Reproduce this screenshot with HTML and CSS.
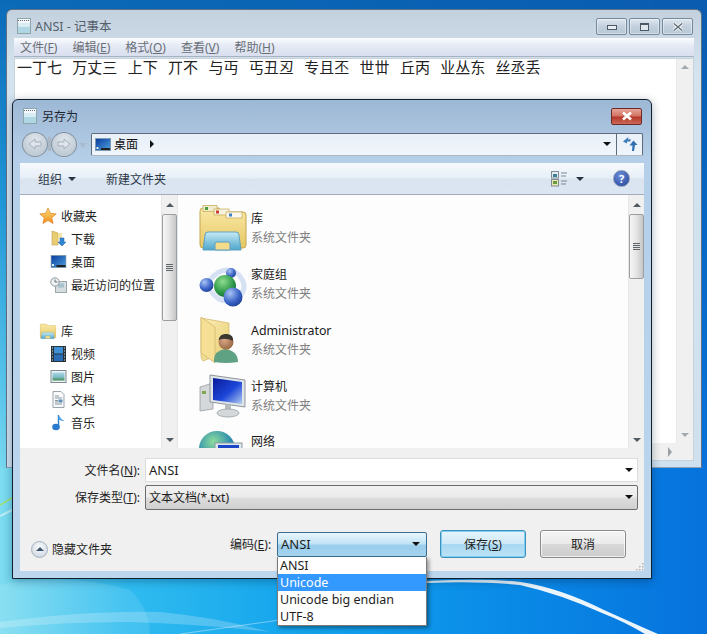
FILE: index.html
```html
<!DOCTYPE html>
<html lang="zh-CN">
  <head>
    <meta charset="UTF-8" />
    <title>另存为</title>
    <link rel="stylesheet" href="styles.css">
  </head>
  <body>
    <svg class="wallpaper" viewBox="0 0 707 634" width="707" height="634">
      <defs>
        <linearGradient id="left-strip" x1="0" y1="0" x2="0" y2="1">
          <stop offset="0" stop-color="#0b6ab8"/>
          <stop offset="0.43" stop-color="#1f97d8"/>
          <stop offset="0.85" stop-color="#5cc8ec"/>
          <stop offset="1" stop-color="#78d8f0"/>
        </linearGradient>
        <linearGradient id="right-strip" x1="0" y1="0" x2="0" y2="1">
          <stop offset="0" stop-color="#0a5cb0"/>
          <stop offset="1" stop-color="#0672dc"/>
        </linearGradient>
        <linearGradient id="top" x1="0" y1="0" x2="1" y2="0">
          <stop offset="0" stop-color="#0b6ab8"/>
          <stop offset="1" stop-color="#0a5cb0"/>
        </linearGradient>
        <linearGradient id="low" x1="0" y1="0" x2="1" y2="0">
          <stop offset="0" stop-color="#7ddcf0"/>
          <stop offset="0.18" stop-color="#30bcf0"/>
          <stop offset="0.42" stop-color="#14a4ec"/>
          <stop offset="0.7" stop-color="#0a8ce8"/>
          <stop offset="1" stop-color="#0672dc"/>
        </linearGradient>
      </defs>
      <rect width="707" height="468" fill="url(#top)"/>
      <rect width="14" height="468" fill="url(#left-strip)"/>
      <rect x="652" width="55" height="468" fill="url(#right-strip)"/>
      <rect y="468" width="707" height="166" fill="url(#low)"/>
      <path d="M0 505 L12 498" stroke="#9fe070" stroke-width="1.500"/>
      <path d="M0 516 L12 510" stroke="#fff" stroke-width="2" opacity=".5"/>
      <path d="M0 585 Q70 572 130 590 Q150 610 150 634 L0 634Z" fill="#fff" opacity=".1"/>
      <path d="M0 622 Q90 610 160 612 Q220 618 270 632 Q200 624 130 622 Q60 622 0 628Z" fill="#fff" opacity=".22"/>
      <path d="M180 634 L280 620" stroke="#fff" stroke-width="1" opacity=".4"/>
      <path d="M427 581 Q490 578 521 582 Q560 588 604 610 Q635 624 658 634 L645 634 Q625 622 602 613 Q560 594 520 585 Q480 581 427 583Z" fill="#fff" opacity=".92"/>
    </svg>

    <div class="notepad">
      <div class="titlebar">
        <svg class="title-icon" width="16" height="16" viewBox="0 0 16 16"><use href="#note"/></svg>
        <span class="title-text">ANSI - 记事本</span>
        <div class="caption-buttons">
          <div class="cap-btn"><span class="glyph-min"></span></div>
          <div class="cap-btn"><span class="glyph-max"></span></div>
          <div class="cap-btn cap-x">
            <svg width="14" height="10" viewBox="0 0 14 10"><path d="M3 1.500 L11 8.500 M11 1.500 L3 8.500" stroke="#f2f5f8" stroke-width="3.400"/><path d="M3 1.500 L11 8.500 M11 1.500 L3 8.500" stroke="#5b6873" stroke-width="1.200"/></svg>
          </div>
        </div>
      </div>
      <div class="menubar">
        <span>文件(<u>F</u>)</span>
        <span>编辑(<u>E</u>)</span>
        <span>格式(<u>O</u>)</span>
        <span>查看(<u>V</u>)</span>
        <span>帮助(<u>H</u>)</span>
      </div>
      <div class="editor">
        <div class="editor-main">
          <div class="editor-text">一丁七 万丈三 上下 丌不 与丏 丐丑丒 专且丕 世丗 丘丙 业丛东 丝丞丢</div>
          <div class="scroll-v plain">
            <span class="arrow-up"></span>
            <span class="arrow-down"></span>
          </div>
        </div>
        <div class="scroll-h"><span class="arrow-right"></span></div>
      </div>
    </div>

    <div class="dialog">
      <div class="dlg-title">
        <svg class="title-icon" width="16" height="16" viewBox="0 0 16 16">
          <symbol id="note" viewBox="0 0 16 16">
            <rect x="1.500" y=".5" width="13" height="15" fill="#d8ecf4" stroke="#8fa5ad"/>
            <rect x="2" y="1" width="12" height="4" fill="#f4f8fa"/>
            <path d="M2 2.500h12" stroke="#5c7078" stroke-dasharray="1 1"/>
            <rect x="2" y="9" width="12" height="6" fill="#aed6e3"/>
          </symbol>
          <use href="#note"/>
        </svg>
        <span>另存为</span>
        <div class="close-red">
          <svg width="14" height="10" viewBox="0 0 14 10"><path d="M3 1.500 L11 8.500 M11 1.500 L3 8.500" stroke="#fff" stroke-width="2.600"/></svg>
        </div>
      </div>

      <div class="navbar">
        <div class="nav-buttons">
          <div class="nav-round"><svg width="16" height="16" viewBox="0 0 16 16"><path d="M2 8 L8 3 V6 H14 V10 H8 V13Z" fill="#dfe5ec" stroke="#a6aeb8"/></svg></div>
          <span class="nav-bridge"></span>
          <div class="nav-round"><svg width="16" height="16" viewBox="0 0 16 16"><path d="M14 8 L8 3 V6 H2 V10 H8 V13Z" fill="#dfe5ec" stroke="#a6aeb8"/></svg></div>
          <span class="nav-caret"></span>
        </div>
        <div class="address">
          <svg class="addr-icon" width="16" height="13" viewBox="0 0 16 13">
            <use href="#desk"/>
          </svg>
          <span class="addr-text">桌面</span>
          <span class="addr-sep"></span>
          <span class="addr-drop"></span>
          <div class="refresh">
            <svg width="16" height="16" viewBox="0 0 16 16">
              <path d="M6.500 1 L1 5.500 L5 7.500 L5 5.500 L8.500 5.500 L8.500 3 L6 3.500Z" fill="#3d7ab8"/>
              <path d="M11.500 4.500 L15.500 9 L13 9 L12 15 L10 15 L10.500 9.500 L7.500 9.500Z" fill="#2d6fb0"/>
            </svg>
          </div>
        </div>
      </div>

      <div class="panel">
        <div class="toolbar">
          <span class="tool">组织<span class="tool-caret"></span></span>
          <span class="tool new-folder">新建文件夹</span>
          <svg class="view-icon" width="17" height="16" viewBox="0 0 17 16">
            <rect x=".5" y=".5" width="7" height="6.500" fill="#e4eef2" stroke="#7f8d95"/>
            <rect x="2" y="3" width="4" height="3" fill="#3d7e9c"/>
            <rect x=".5" y="8.500" width="7" height="6.500" fill="#e8e8b0" stroke="#7f8d95"/>
            <rect x="2" y="10" width="4" height="3" fill="#6a9a40"/>
            <path d="M10 2h6M10 5h5M10 10h6M10 13h5" stroke="#7a8890"/>
          </svg>
          <span class="tool-caret view-caret"></span>
          <div class="help">?</div>
        </div>

        <div class="browser">
          <div class="tree">
            <div class="tree-list">
              <div class="tree-head">
                <svg width="18" height="18" viewBox="0 0 18 18"><defs><linearGradient id="star" x1="0" y1="0" x2="0" y2="1"><stop offset="0" stop-color="#ffe27a"/><stop offset="1" stop-color="#f08a1c"/></linearGradient></defs><path d="M9 1 L11.400 6.300 L17.200 6.900 L12.800 10.800 L14.100 16.500 L9 13.500 L3.900 16.500 L5.200 10.800 L.8 6.900 L6.600 6.300Z" fill="url(#star)" stroke="#d9822b" stroke-width=".7"/></svg>
                <span>收藏夹</span>
              </div>
              <div class="tree-item">
                <svg width="17" height="17" viewBox="0 0 17 17"><path d="M2 1 L8 3 V15 L2 15Z" fill="#e9cd72" stroke="#bfa052" stroke-width=".6"/><path d="M8 3 H12 V9 H8Z" fill="#f3e3a4"/><path d="M10 8 H14 V12 H16 L12 16 L8 12 H10Z" fill="#2f86d2" stroke="#1f5f9e" stroke-width=".5"/></svg>
                <span>下载</span>
              </div>
              <div class="tree-item">
                <svg width="16" height="13" viewBox="0 0 16 13">
                  <symbol id="desk" viewBox="0 0 16 13">
                    <defs><linearGradient id="deskfill" x1="0" y1="0" x2="1" y2="1"><stop offset="0" stop-color="#0a3a9c"/><stop offset="1" stop-color="#4da3e0"/></linearGradient></defs>
                    <rect x=".5" y=".5" width="15" height="12" fill="url(#deskfill)" stroke="#7f9ab0"/>
                    <rect x="6" y="10" width="9" height="2" fill="#222"/>
                    <rect x="1.500" y="9" width="2" height="2" fill="#dfeaf2"/>
                  </symbol>
                  <use href="#desk"/>
                </svg>
                <span>桌面</span>
              </div>
              <div class="tree-item">
                <svg width="17" height="16" viewBox="0 0 17 16"><rect x="5.500" y="4.500" width="11" height="11" fill="#d6dde0" stroke="#9ba6ab"/><rect x="8" y="6.500" width="6" height="4" fill="#a6c0cc"/><circle cx="5" cy="5" r="4.200" fill="#eef2f3" stroke="#8e9aa0"/><path d="M5 2.500V5H7.500" stroke="#5e6c72" fill="none"/></svg>
                <span>最近访问的位置</span>
              </div>
              <div class="tree-head lib-head">
                <svg width="18" height="16" viewBox="0 0 48 46"><use href="#libfolder"/></svg>
                <span>库</span>
              </div>
              <div class="tree-item">
                <svg width="15" height="16" viewBox="0 0 15 16"><rect width="15" height="16" fill="#26323a"/><rect x="3" y="1" width="9" height="6.500" fill="#3f8fd6"/><rect x="3" y="8.500" width="9" height="6.500" fill="#2a6cb4"/><path d="M1 2h1M1 5h1M1 8h1M1 11h1M1 14h1M13 2h1M13 5h1M13 8h1M13 11h1M13 14h1" stroke="#d8e2e8"/></svg>
                <span>视频</span>
              </div>
              <div class="tree-item">
                <svg width="16" height="13" viewBox="0 0 16 13"><defs><linearGradient id="photo" x1="0" y1="0" x2="0" y2="1"><stop offset="0" stop-color="#a8d8ea"/><stop offset=".6" stop-color="#7cb8c0"/><stop offset="1" stop-color="#3d8a4c"/></linearGradient></defs><rect x=".5" y=".5" width="15" height="12" fill="#eef2f4" stroke="#7d8a92"/><rect x="2" y="2.500" width="12" height="8" fill="url(#photo)"/></svg>
                <span>图片</span>
              </div>
              <div class="tree-item">
                <svg width="14" height="17" viewBox="0 0 14 17"><path d="M1.500 .5H9.500L12.500 3.500V16.500H1.500Z" fill="#f7f9fa" stroke="#9aa5ad"/><path d="M3.500 5h4M3.500 7h7M3.500 13h7" stroke="#8897a0"/><rect x="7" y="8.500" width="4" height="3" fill="#5d8fb8"/><path d="M3.500 9.500h3M3.500 11h3" stroke="#8897a0"/></svg>
                <span>文档</span>
              </div>
              <div class="tree-item">
                <svg width="14" height="17" viewBox="0 0 14 17"><path d="M7 1 V12.500" stroke="#2f7fd0" stroke-width="1.400"/><ellipse cx="4.500" cy="13" rx="3.800" ry="3.200" fill="#2a7ad0"/><path d="M7 1 Q9 5 13 7 Q10 7 7 5.500Z" fill="#4c9ce6"/></svg>
                <span>音乐</span>
              </div>
            </div>
            <div class="scroll-v narrow">
              <span class="arrow-up dark"></span>
              <div class="thumb tree-thumb"><span class="grip"></span></div>
              <span class="arrow-down dark"></span>
            </div>
          </div>

          <div class="files">
            <div class="file-list">
              <div class="file">
                <svg width="48" height="46" viewBox="0 0 48 46">
                  <defs>
                    <linearGradient id="fold" x1="0" y1="0" x2="0" y2="1"><stop offset="0" stop-color="#f9e9a6"/><stop offset="1" stop-color="#e6c764"/></linearGradient>
                    <linearGradient id="tray" x1="0" y1="0" x2="0" y2="1"><stop offset="0" stop-color="#c6eaf4"/><stop offset="1" stop-color="#4ea6cc"/></linearGradient>
                    <symbol id="libfolder" viewBox="0 0 48 46">
                      <path d="M4 3 H20 L22 7 H44 Q47 7 47 10 V40 Q47 43 44 43 H4 Q1 43 1 40 V6 Q1 3 4 3Z" fill="url(#fold)" stroke="#c4a650"/>
                      <path d="M9 27 H37 Q40 27 40 30 L42 45 H4 L6 30 Q6 27 9 27Z" fill="url(#tray)" stroke="#5e9fbe"/>
                      <path d="M16 45 V39 Q16 37 18 37 H29 Q31 37 31 39 V45Z" fill="#f3db8a" stroke="#5e9fbe"/>
                    </symbol>
                  </defs>
                  <use href="#libfolder"/>
                  <rect x="4" y=".5" width="14" height="6" fill="#f2eccf" stroke="#c4a650" stroke-width=".7"/>
                  <rect x="6" y="2" width="3" height="3" fill="#4a9a42"/>
                  <rect x="15" y="4" width="15" height="6" fill="#f7f2dc" stroke="#c4a650" stroke-width=".7"/>
                  <rect x="17" y="5.500" width="3" height="3" fill="#c93a30"/>
                  <rect x="27" y="7" width="16" height="6" fill="#fbf9ee" stroke="#c4a650" stroke-width=".7"/>
                  <rect x="30" y="8.500" width="3" height="3" fill="#3d7fc0"/>
                </svg>
                <div class="file-meta"><div class="file-name">库</div><div class="file-sub">系统文件夹</div></div>
              </div>
              <div class="file">
                <svg width="48" height="46" viewBox="0 0 48 46">
                  <defs>
                    <radialGradient id="ball-b" cx=".35" cy=".3" r=".8"><stop offset="0" stop-color="#a9c4f4"/><stop offset=".6" stop-color="#3b64c8"/><stop offset="1" stop-color="#1c3a8c"/></radialGradient>
                    <radialGradient id="ball-g" cx=".4" cy=".3" r=".8"><stop offset="0" stop-color="#8fdc90"/><stop offset=".6" stop-color="#2e9a48"/><stop offset="1" stop-color="#0f6430"/></radialGradient>
                  </defs>
                  <path d="M10 20 Q24 2 40 14 Q50 26 40 36 Q22 46 12 30" fill="none" stroke="#d6e2f4" stroke-width="5"/>
                  <circle cx="32" cy="12" r="5" fill="url(#ball-b)"/>
                  <circle cx="7.500" cy="24" r="7" fill="url(#ball-b)"/>
                  <circle cx="26" cy="25" r="11" fill="url(#ball-g)"/>
                  <circle cx="34" cy="36" r="9.500" fill="url(#ball-b)"/>
                </svg>
                <div class="file-meta"><div class="file-name">家庭组</div><div class="file-sub">系统文件夹</div></div>
              </div>
              <div class="file">
                <svg width="48" height="46" viewBox="0 0 48 46">
                  <defs>
                    <linearGradient id="fold2" x1="0" y1="0" x2="1" y2="1"><stop offset="0" stop-color="#fbeeb8"/><stop offset="1" stop-color="#e8cc70"/></linearGradient>
                    <radialGradient id="skin" cx=".4" cy=".4" r=".7"><stop offset="0" stop-color="#d8a684"/><stop offset="1" stop-color="#94613f"/></radialGradient>
                  </defs>
                  <path d="M2 1 L30 6 V40 H14 L4 44 Q2 42 2 39Z" fill="url(#fold2)" stroke="#d0b466" stroke-width=".7"/>
                  <path d="M2 0 L16 10 V46 L2 36Z" fill="#f4df95" stroke="#cfb264" stroke-width=".7"/>
                  <path d="M15 45 Q14 34 26 32 Q39 34 39 45 Q27 47 15 45Z" fill="#5fa283"/>
                  <circle cx="27" cy="25" r="7.500" fill="url(#skin)"/>
                  <path d="M19.500 23 Q21 16 28 17 Q35 18 34 24 Q27 20 19.500 23Z" fill="#3a3630"/>
                </svg>
                <div class="file-meta"><div class="file-name latin">Administrator</div><div class="file-sub">系统文件夹</div></div>
              </div>
              <div class="file">
                <svg width="48" height="46" viewBox="0 0 48 46">
                  <defs><linearGradient id="screen" x1="0" y1="0" x2="1" y2="1"><stop offset="0" stop-color="#0a1a9a"/><stop offset=".55" stop-color="#1c46d8"/><stop offset="1" stop-color="#b4ccf0"/></linearGradient></defs>
                  <path d="M1 14 L14 10 V36 L1 38Z" fill="#d4d8da" stroke="#8e9498" stroke-width=".7"/>
                  <rect x="3" y="18" width="4" height="3" fill="#7ea84a"/>
                  <path d="M11 2 L46 7 V34 L11 29Z" fill="#dfe4e8" stroke="#8f979c"/>
                  <path d="M14 5 L43 9 V31 L14 27Z" fill="url(#screen)"/>
                  <path d="M26 31 L32 32 V38 L26 37Z" fill="#b6bcc0"/>
                  <ellipse cx="29" cy="40" rx="11" ry="4" fill="#d4d8da" stroke="#a8aeb2"/>
                </svg>
                <div class="file-meta"><div class="file-name">计算机</div><div class="file-sub">系统文件夹</div></div>
              </div>
              <div class="file file-cut">
                <svg width="48" height="46" viewBox="0 0 48 46">
                  <defs><radialGradient id="globe" cx=".4" cy=".3" r=".8"><stop offset="0" stop-color="#8edc9c"/><stop offset=".6" stop-color="#2d8fb0"/><stop offset="1" stop-color="#12508c"/></radialGradient></defs>
                  <circle cx="18" cy="20" r="18" fill="url(#globe)"/>
                  <rect x="16" y="14" width="27" height="18" fill="#dfe8ee" stroke="#8a9aa4"/>
                  <rect x="19" y="16" width="21" height="14" fill="#1c46c8"/>
                </svg>
                <div class="file-meta"><div class="file-name">网络</div></div>
              </div>
            </div>
            <div class="scroll-v narrow">
              <span class="arrow-up dark"></span>
              <div class="thumb file-thumb"><span class="grip"></span></div>
              <span class="arrow-down dark"></span>
            </div>
          </div>
        </div>

        <div class="save-form">
          <div class="form-row">
            <label class="form-label">文件名(<u>N</u>):</label>
            <div class="field name-field"><span>ANSI</span><span class="caret-sm"></span></div>
          </div>
          <div class="form-row type-row">
            <label class="form-label">保存类型(<u>T</u>):</label>
            <div class="field type-field"><span>文本文档(*.txt)</span><span class="caret-sm"></span></div>
          </div>
          <div class="action-row">
            <div class="hide-folders">
              <span class="hide-btn"><span class="hide-arrow"></span></span>
              <span>隐藏文件夹</span>
            </div>
            <span class="enc-label">编码(<u>E</u>):</span>
            <div class="enc-wrap">
              <div class="enc-select"><span>ANSI</span><span class="caret-sm"></span></div>
              <div class="enc-menu">
                <div class="enc-opt">ANSI</div>
                <div class="enc-opt selected">Unicode</div>
                <div class="enc-opt">Unicode big endian</div>
                <div class="enc-opt">UTF-8</div>
              </div>
            </div>
            <div class="btn primary">保存(<u>S</u>)</div>
            <div class="btn">取消</div>
          </div>
          <svg class="resize-grip" width="9" height="9" viewBox="0 0 9 9">
            <path d="M7 1h1.500v1.500H7zM4 4h1.500v1.500H4zM7 4h1.500v1.500H7zM1 7h1.500v1.500H1zM4 7h1.500v1.500H4zM7 7h1.500v1.500H7z" fill="#b4b4b4"/>
          </svg>
        </div>
      </div>
    </div>
  </body>
</html>
```

FILE: styles.css
```css
* {
  box-sizing: border-box;
}

html,
body {
  margin: 0;
  width: 707px;
  height: 634px;
  overflow: hidden;
}

body {
  position: relative;
  font-family: "Noto Sans", "Noto Sans CJK SC", sans-serif;
  font-size: 12px;
  color: #1e1e1e;
}

.wallpaper {
  position: absolute;
  top: 0;
  left: 0;
}

svg {
  flex: none;
  display: block;
}

u {
  text-decoration: underline;
}

/* Notepad window behind the dialog */
.notepad {
  position: absolute;
  left: 6px;
  top: 9px;
  width: 696px;
  height: 459px;
  padding: 0 7px 6px;
  display: flex;
  flex-direction: column;
  background: linear-gradient(#c3d1de, #d5e3ef 60px, #cfe0ef);
  border: 1px solid #5f7385;
  border-bottom-color: #8aa0b2;
  border-radius: 6px 6px 0 0;
}

.titlebar {
  height: 28px;
  flex: none;
  display: flex;
  align-items: center;
  padding-left: 2px;
  color: #56616c;
  font-size: 12.5px;
}

.title-icon {
  margin-right: 3px;
}

.titlebar .title-icon {
  margin-top: 3px;
}

.title-text {
  flex: 1;
  padding-top: 2px;
}

.caption-buttons {
  display: flex;
  gap: 2px;
  margin: 5px 1px 0 0;
}

.cap-btn {
  width: 31px;
  height: 17px;
  display: flex;
  align-items: center;
  justify-content: center;
  border: 1px solid #76899b;
  border-radius: 2px;
  background: linear-gradient(#dfe7ef, #c2d0dd 50%, #b8c8d6);
  box-shadow: inset 0 0 0 1px rgba(255, 255, 255, 0.4);
}

.glyph-min {
  width: 10px;
  height: 5px;
  margin-top: 2px;
  border: 1px solid #4d5a66;
  background: #e8eef3;
}

.glyph-max {
  width: 9px;
  height: 8px;
  border: 1px solid #4d5a66;
  border-top-width: 2px;
  background: #dfe7ee;
}

.menubar {
  height: 19px;
  flex: none;
  display: flex;
  align-items: center;
  gap: 15px;
  padding-left: 6px;
  color: #6a6f76;
  font-size: 12px;
  background: linear-gradient(#fbfcfe, #e6ebf6 40%, #d9dfee);
  border-bottom: 1px solid #a9b3c0;
}

.editor {
  flex: 1;
  display: flex;
  flex-direction: column;
  margin-top: 1px;
  background: #fff;
  border: 1px solid #c6d2dc;
}

.editor-main {
  flex: 1;
  display: flex;
  min-height: 0;
}

.editor-text {
  flex: 1;
  padding: 0 2px;
  font-family: "Noto Sans CJK SC", sans-serif;
  font-size: 15px;
  line-height: 16px;
  color: #222;
  white-space: nowrap;
  word-spacing: 7px;
}

.scroll-h {
  height: 17px;
  flex: none;
  display: flex;
  align-items: center;
  padding-left: 653px;
  background: #f0f0f0;
}

/* scrollbars */
.scroll-v {
  width: 17px;
  flex: none;
  display: flex;
  flex-direction: column;
  align-items: center;
  justify-content: space-between;
  padding: 6px 0;
  background: #f0f0f0;
  border-left: 1px solid #e7e7e7;
}

.scroll-v.narrow {
  width: 16px;
  justify-content: flex-start;
  padding: 0;
}

.arrow-up,
.arrow-down {
  width: 0;
  height: 0;
  border-left: 4px solid transparent;
  border-right: 4px solid transparent;
}

.arrow-up {
  border-bottom: 4px solid #a4a9ad;
}

.arrow-down {
  border-top: 4px solid #a4a9ad;
}

.arrow-up.dark {
  margin-top: 8px;
  border-bottom-color: #4f5a62;
}

.arrow-down.dark {
  margin-top: auto;
  margin-bottom: 6px;
  border-top-color: #4f5a62;
}

.arrow-right {
  width: 0;
  height: 0;
  border-top: 5px solid transparent;
  border-bottom: 5px solid transparent;
  border-left: 4px solid #9aa0a5;
}

.thumb {
  width: 15px;
  margin-top: 7px;
  display: flex;
  align-items: center;
  justify-content: center;
  border: 1px solid #9a9fa3;
  border-radius: 2px;
  background: linear-gradient(90deg, #f6f6f6, #e4e4e4 50%, #c6c6c8);
}

.tree-thumb {
  height: 107px;
}

.file-thumb {
  height: 65px;
}

.grip {
  width: 7px;
  height: 7px;
  background: repeating-linear-gradient(#5e6468 0 1px, #dfe1e3 1px 2px);
}

/* Save dialog */
.dialog {
  position: absolute;
  left: 12px;
  top: 99px;
  width: 640px;
  height: 480px;
  padding: 0 7px 7px;
  display: flex;
  flex-direction: column;
  background: linear-gradient(#9db8d5, #b6cfe8 60px, #bcd6ee);
  border: 1px solid #10202c;
  border-radius: 6px 6px 0 0;
  box-shadow: 0 2px 10px rgba(0, 30, 60, 0.35);
}

.dlg-title {
  height: 32px;
  flex: none;
  display: flex;
  align-items: center;
  padding-left: 2px;
  font-size: 12px;
  color: #1c2530;
}

.dlg-title .title-icon {
  margin-right: 4px;
}

.close-red {
  margin: 0 2px 0 auto;
  width: 31px;
  height: 17px;
  display: flex;
  align-items: center;
  justify-content: center;
  border: 1px solid #6e2a24;
  border-radius: 2px;
  background: linear-gradient(#e8a69a, #d27464 45%, #b4382a 55%, #cc6a58);
}

.navbar {
  height: 24px;
  flex: none;
  display: flex;
  align-items: center;
  margin-left: 2px;
}

.nav-buttons {
  width: 69px;
  flex: none;
  display: flex;
  align-items: center;
}

.nav-round {
  width: 26px;
  height: 25px;
  flex: none;
  display: flex;
  align-items: center;
  justify-content: center;
  border: 1px solid #84919e;
  border-radius: 50%;
  background: radial-gradient(circle at 50% 30%, #dfe6ec, #b4c0cc);
}

.nav-bridge {
  width: 3px;
  height: 14px;
  flex: none;
  background: #aab8c6;
}

.nav-caret {
  margin: 2px 0 0 2px;
  width: 0;
  height: 0;
  border-left: 4px solid transparent;
  border-right: 4px solid transparent;
  border-top: 5px solid #a9bccd;
}

.address {
  flex: 1;
  height: 23px;
  margin-right: 1px;
  display: flex;
  align-items: center;
  padding-left: 3px;
  background: linear-gradient(#e9f0f8, #f0f5fb);
  border: 1px solid #5e6c7a;
  border-bottom-color: #aab6c2;
  border-radius: 2px;
}

.addr-icon {
  margin-right: 3px;
}

.addr-text {
  color: #111;
}

.addr-sep {
  margin-left: 12px;
  width: 0;
  height: 0;
  border-top: 4px solid transparent;
  border-bottom: 4px solid transparent;
  border-left: 4px solid #111;
}

.addr-drop {
  margin: 0 5px 0 auto;
  width: 0;
  height: 0;
  border-left: 4px solid transparent;
  border-right: 4px solid transparent;
  border-top: 4px solid #111;
}

.refresh {
  width: 26px;
  height: 100%;
  display: flex;
  align-items: center;
  justify-content: center;
  border-left: 1px solid #5e6c7a;
}

.panel {
  flex: 1;
  min-height: 0;
  margin-top: 7px;
  display: flex;
  flex-direction: column;
  position: relative;
  background: #f0f0f0;
}

.toolbar {
  height: 32px;
  flex: none;
  display: flex;
  align-items: center;
  padding: 0 14px 0 18px;
  color: #2d3a4a;
  background: linear-gradient(#f7fafd, #e6eef7 48%, #dae4f0 52%, #dce6f2);
  border-bottom: 1px solid #a0acba;
}

.tool {
  display: flex;
  align-items: center;
}

.new-folder {
  margin-left: 30px;
}

.tool-caret {
  margin-left: 6px;
  width: 0;
  height: 0;
  border-left: 4px solid transparent;
  border-right: 4px solid transparent;
  border-top: 4px solid #243242;
}

.view-icon {
  margin-left: auto;
}

.view-caret {
  margin: 0 0 0 8px;
}

.help {
  margin-left: 29px;
  width: 17px;
  height: 17px;
  display: flex;
  align-items: center;
  justify-content: center;
  border-radius: 50%;
  border: 1px solid #8a9bb0;
  background: radial-gradient(circle at 40% 30%, #6c8fd8, #1f3f98);
  color: #fff;
  font-weight: bold;
  font-size: 11px;
  line-height: 1;
}

.browser {
  height: 253px;
  flex: none;
  display: flex;
  background: #fff;
}

.tree {
  width: 158px;
  flex: none;
  display: flex;
  border-right: 1px solid #e4e6e8;
}

.tree-list {
  flex: 1;
  padding-top: 9px;
  font-size: 12px;
}

.tree-head,
.tree-item {
  height: 23px;
  display: flex;
  align-items: center;
}

.tree-head {
  padding-left: 19px;
  gap: 4px;
}

.tree-item {
  padding-left: 30px;
}

.tree-item svg {
  width: 17px;
  margin-right: 4px;
}

.lib-head {
  margin-top: 23px;
}

.files {
  flex: 1;
  display: flex;
  margin-left: 2px;
  min-width: 0;
}

.file-list {
  flex: 1;
  padding: 10px 0 0 19px;
  overflow: hidden;
  background: #fdfdfe;
}

.file {
  height: 56px;
  display: flex;
  align-items: flex-start;
  gap: 4px;
}

.file-cut {
  height: 19px;
}

.file-cut .file-meta {
  padding-top: 6px;
  line-height: 13px;
}

.file-meta {
  padding-top: 4px;
  line-height: 19px;
}

.file-name {
  color: #1a1a1a;
}

.file-name.latin {
  font-size: 12.400px;
}

.file-sub {
  color: #7f7f7f;
}

.save-form {
  flex: 1;
  position: relative;
  padding: 9px 6px 0 0;
}

.form-row {
  display: flex;
  align-items: center;
  height: 26px;
}

.type-row {
  margin-top: 1px;
}

.form-label {
  width: 125px;
  flex: none;
  padding-right: 5px;
  text-align: right;
  font-size: 12px;
}

.field {
  flex: 1;
  height: 24px;
  padding: 0 4px 0 3px;
  display: flex;
  align-items: center;
  justify-content: space-between;
}

.name-field {
  background: #fff;
  border: 1px solid #dcdcdc;
  font-size: 13px;
}

.type-field {
  height: 25px;
  border: 1px solid #6c6c6c;
  border-radius: 2px;
  background: linear-gradient(#f2f2f2, #ebebeb 45%, #dcdcdc 55%, #cfcfcf);
}

.caret-sm {
  width: 0;
  height: 0;
  border-left: 4px solid transparent;
  border-right: 4px solid transparent;
  border-top: 4px solid #111;
}

.action-row {
  position: relative;
  display: flex;
  align-items: center;
  height: 28px;
  margin-top: 20px;
}

.hide-folders {
  display: flex;
  align-items: center;
  gap: 4px;
  width: 210px;
  margin-top: 10px;
  padding-left: 11px;
}

.hide-btn {
  width: 17px;
  height: 17px;
  display: flex;
  align-items: center;
  justify-content: center;
  border: 1px solid #a5b2bf;
  border-radius: 50%;
  background: radial-gradient(circle at 50% 35%, #fafcfe, #c6d0da);
}

.hide-arrow {
  width: 0;
  height: 0;
  border-left: 4px solid transparent;
  border-right: 4px solid transparent;
  border-bottom: 4px solid #3c5472;
}

.enc-label {
  width: 47px;
  flex: none;
}

.enc-wrap {
  position: relative;
  width: 150px;
  flex: none;
  margin-right: 13px;
}

.enc-select {
  height: 25px;
  display: flex;
  align-items: center;
  justify-content: space-between;
  padding: 0 6px 0 3px;
  font-size: 13px;
  border: 1px solid #3a6e90;
  border-radius: 2px;
  background: linear-gradient(#e8f5fc, #c4e4f6 45%, #98cdec 55%, #a6d4ef);
}

.enc-menu {
  position: absolute;
  left: 0;
  top: 25px;
  width: 150px;
  background: #fff;
  border: 1px solid #7a7a7a;
  border-top: 0;
  box-shadow: 2px 2px 4px rgba(0, 0, 0, 0.4);
  font-size: 12.500px;
}

.enc-opt {
  height: 17px;
  line-height: 17px;
  padding-left: 2px;
}

.enc-opt.selected {
  background: #3399ff;
  color: #fff;
}

.btn {
  width: 86px;
  height: 28px;
  flex: none;
  display: flex;
  align-items: center;
  justify-content: center;
  border: 1px solid #8a8a8a;
  border-radius: 3px;
  background: linear-gradient(#f4f4f4, #ebebeb 48%, #d8d8d8 52%, #cdcdcd);
  box-shadow: inset 0 0 0 1px rgba(255, 255, 255, 0.7);
}

.btn.primary {
  margin-right: 14px;
  border-color: #3c8fb8;
  background: linear-gradient(#e6f4fb, #cfe9f7 48%, #a8d8f2 52%, #bce2f6);
  box-shadow: inset 0 0 0 1px #7fd0f2;
}

.resize-grip {
  position: absolute;
  right: 0;
  bottom: 0;
}
```
